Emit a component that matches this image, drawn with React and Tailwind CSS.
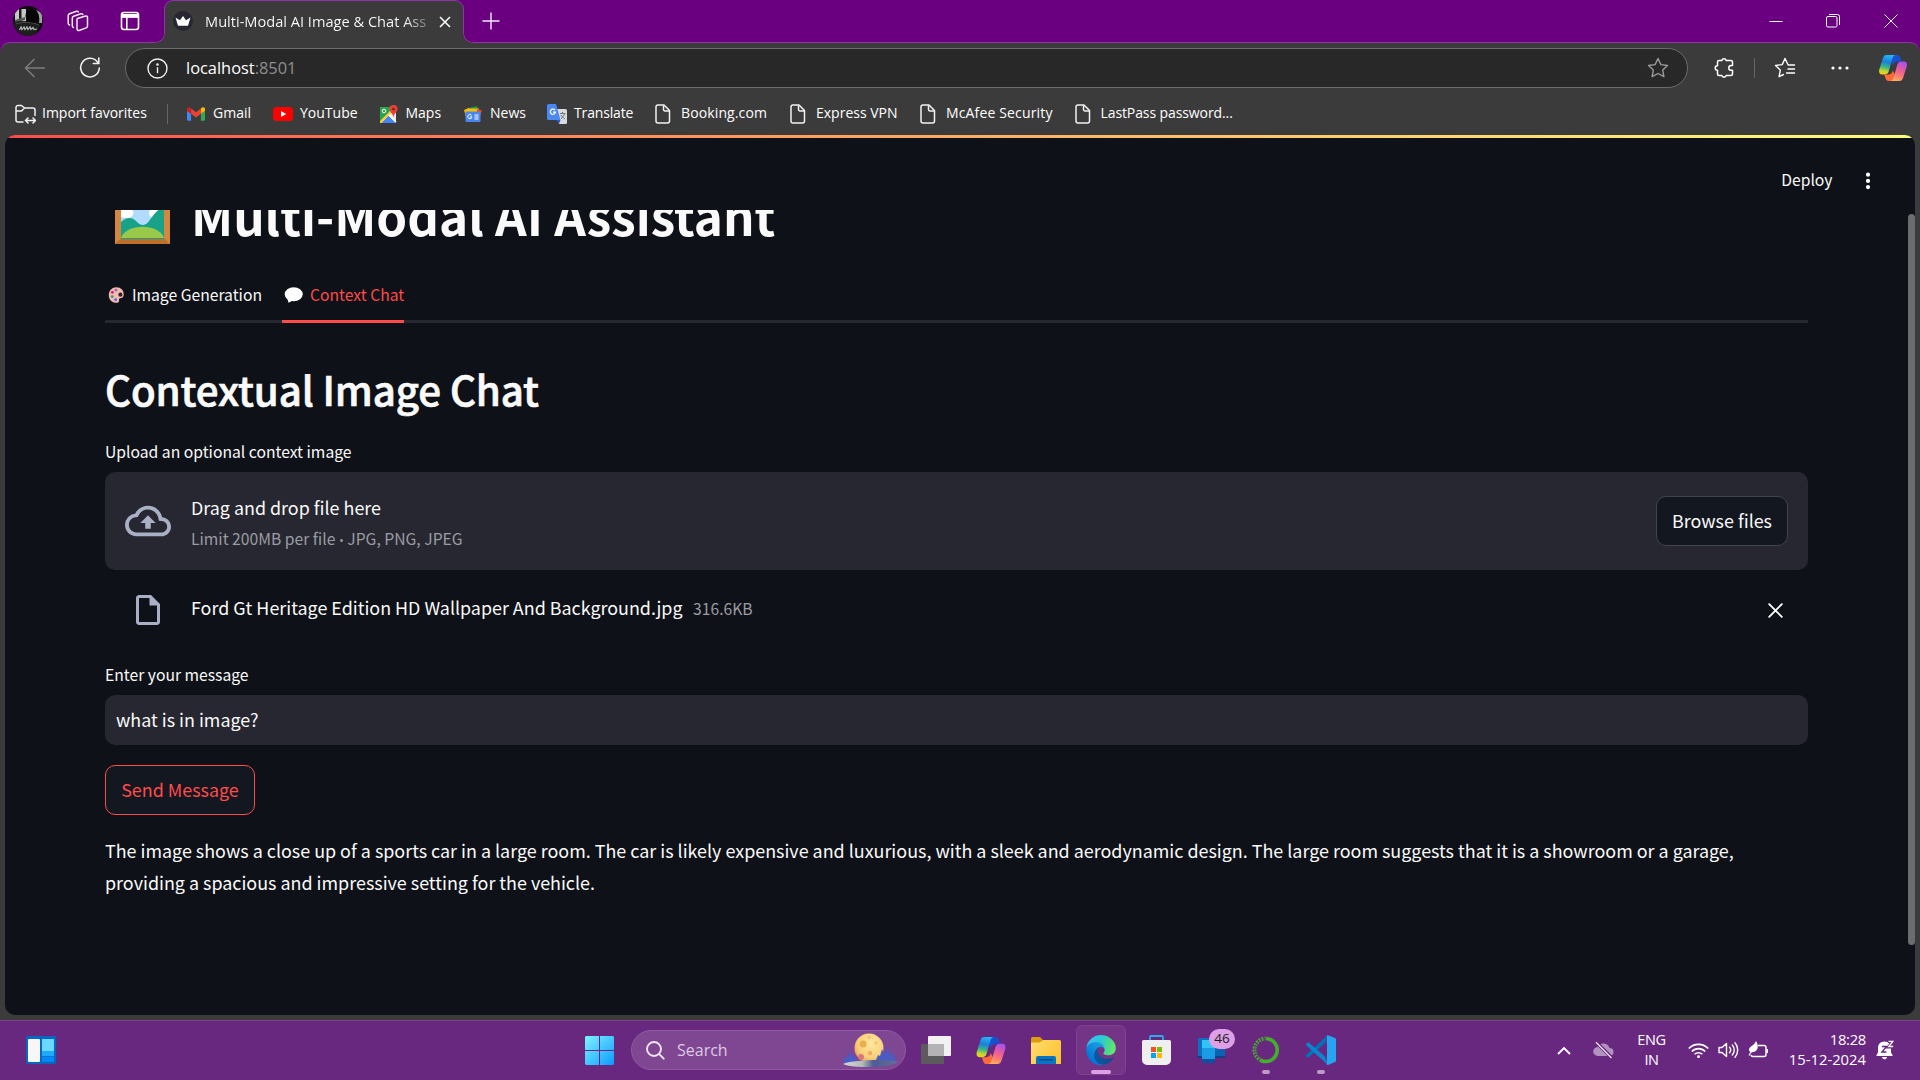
import React from 'react';

const UI = "font-['Open_Sans','Noto_Sans',sans-serif]";
const DOC = "font-['Noto_Sans_CJK_SC','Noto_Sans',sans-serif]";

function Copilot({ id, w, h }) {
  return (
    <svg width={w} height={h} viewBox="0 0 28 26" fill="none">
      <defs>
        <linearGradient id={id + 'a'} x1="9" y1="0" x2="5" y2="20" gradientUnits="userSpaceOnUse">
          <stop stopColor="#22b8f5" /><stop offset=".35" stopColor="#1a80dd" /><stop offset=".6" stopColor="#35b48a" /><stop offset=".82" stopColor="#c6d82c" /><stop offset="1" stopColor="#ffcc10" />
        </linearGradient>
        <linearGradient id={id + 'b'} x1="24" y1="7" x2="17" y2="26" gradientUnits="userSpaceOnUse">
          <stop stopColor="#a552f0" /><stop offset=".4" stopColor="#e85a9c" /><stop offset=".75" stopColor="#fb8070" /><stop offset="1" stopColor="#ffb15c" />
        </linearGradient>
      </defs>
      <path d="M14 0h4.2c2 0 2.8 1 3.4 3l1.2 3.6h-4c-3 0-3.8 1.6-4.6 4L12 6z" fill="#1c4ed0" />
      <path d="M14 26H9.8c-2 0-2.8-1-3.4-3l-1.2-3.6h4c3 0 3.8-1.6 4.6-4L16 20z" fill="#fb6a38" />
      <path d="M7.5 0H17c-2 0-3 1.6-3.6 3.6L9.8 16c-.8 2.6-2 3.5-4.6 3.5H3C.5 19.5-.4 17.5.3 14.5L3.8 3.5C4.6 1 5.6 0 7.5 0z" fill={`url(#${id}a)`} />
      <path d="M20.500 26H11c2 0 3-1.600 3.600-3.600L18.200 10c.8-2.600 2-3.500 4.600-3.500H25c2.500 0 3.400 2 2.700 5l-3.500 11c-.8 2.500-1.800 3.500-3.700 3.500z" fill={`url(#${id}b)`} />
    </svg>
  );
}

function PageIcon() {
  return (
    <svg width="20" height="20" viewBox="0 0 20 20" fill="none" stroke="#f2f2f2" strokeWidth="1.5" strokeLinejoin="round">
      <path d="M4 1h6l5.500 5.500V17a2 2 0 0 1-2 2H4a2 2 0 0 1-2-2V3a2 2 0 0 1 2-2z" /><path d="M9.500 1.500V5.500a1.500 1.500 0 0 0 1.500 1.500H15.500" />
    </svg>
  );
}

const icons = {
  gmail: (
    <svg width="18" height="14" viewBox="52 42 88 66">
      <path fill="#4285f4" d="M58 108h14V74L52 59v43c0 3.320 2.690 6 6 6" /><path fill="#34a853" d="M120 108h14c3.320 0 6-2.690 6-6V59l-20 15" />
      <path fill="#fbbc04" d="M120 48v26l20-15v-8c0-7.420-8.470-11.650-14.400-7.200" /><path fill="#ea4335" d="M72 74V48l24 18 24-18v26L96 92" />
      <path fill="#c5221f" d="M52 51v8l20 15V48l-5.600-4.200c-5.940-4.450-14.400-.220-14.400 7.200" />
    </svg>
  ),
  youtube: (
    <svg width="20" height="14" viewBox="0 0 20 14"><rect width="20" height="14" rx="3.500" fill="#f00" /><path d="M8 4l5.200 3L8 10z" fill="#fff" /></svg>
  ),
  maps: (
    <svg width="18" height="18" viewBox="0 0 18 18">
      <rect y="2" width="16" height="16" rx="1.500" fill="#e8e8e8" /><path d="M0 3.500A1.500 1.500 0 0 1 1.500 2H11l-2 7-9 9z" fill="#2ba24c" />
      <path d="M1 18l7.500-7.500L16 18z" fill="#4285f4" /><path d="M0 16L11 5l1.500 1.500L1.500 18H0z" fill="#fbcb3b" /><path d="M9 10l7 7" stroke="#fff" strokeWidth="1.600" />
      <circle cx="4" cy="6" r="1.800" fill="none" stroke="#fff" /><path d="M13.500 0a4 4 0 0 1 4 4c0 3-3.200 4.200-4 8-.8-3.800-4-5-4-8a4 4 0 0 1 4-4z" fill="#e94335" /><circle cx="13.500" cy="4" r="1.500" fill="#8c1d18" />
    </svg>
  ),
  news: (
    <svg width="18" height="16" viewBox="0 0 18 16">
      <path d="M4 2l9-2 1 4H4z" fill="#189a48" /><path d="M0 4l5-2 1 7-4 2z" fill="#fbbc04" /><path d="M3 2.500h12V9H3z" fill="#fbbc04" /><path d="M13 3l5 1.500L16 10l-3-1z" fill="#ea4335" />
      <rect x="1.500" y="5.500" width="15" height="10.500" rx="1" fill="#4a86f0" /><path d="M7.500 9.300a2.100 2.100 0 1 0 .4 1.700H6M10.500 9h4M10.500 11h4M10.500 13h4" stroke="#fff" fill="none" />
    </svg>
  ),
  translate: (
    <svg width="20" height="20" viewBox="0 0 20 20">
      <path d="M8 5h10.500A1.500 1.500 0 0 1 20 6.500V18.500a1.500 1.500 0 0 1-1.500 1.500H12z" fill="#d8dadd" /><path d="M1.500 0H9l4.500 16H1.500A1.500 1.500 0 0 1 0 14.500v-13A1.500 1.500 0 0 1 1.500 0z" fill="#4a88f2" />
      <path d="M9.500 16h4L12 20z" fill="#2b56c4" /><path d="M8 6.200a2.600 2.600 0 1 0 .5 2H6" stroke="#fff" strokeWidth="1.200" fill="none" /><path d="M13 9.500h5.500M15.500 8v1.500M17.500 9.500c-.5 2.500-2 4-3.500 5M14 11c.8 1.800 2.500 3 4 4" stroke="#70757c" fill="none" />
    </svg>
  ),
};

function Bookmark({ icon, label, width, tracking = '' }) {
  return (
    <div className={`flex shrink-0 items-center gap-[7px] ${width}`}>
      <span className="flex h-5 w-5 items-center justify-center">{icon}</span>
      <span className={`whitespace-nowrap pb-px text-sm leading-5 text-white ${tracking}`}>{label}</span>
    </div>
  );
}

function TabStrip() {
  return (
    <div className="flex h-[43px] items-center bg-[#6a0080]">
      <div className="flex w-[164px] shrink-0 items-center pb-px">
        <svg className="ml-[13px]" width="30" height="30" viewBox="0 0 30 30">
          <defs><clipPath id="av"><circle cx="15" cy="15" r="15" /></clipPath></defs>
          <g clipPath="url(#av)">
            <rect width="30" height="30" fill="#0c0d0c" /><path d="M2 3h11v12L2 18z" fill="#c4c9c4" /><path d="M6 3h2.500v14H6z" fill="#1b1b1b" /><path d="M2 14l10-3v3L2 17z" fill="#555a55" /><path d="M23 4l6 3v10h-3c1-5 0-9-3-13z" fill="#9da19d" />
            <path d="M0 17c6-3 10-2 14-1l13 3-5 11H5z" fill="#1d1f1d" /><path d="M3 18c7-2.500 16-2 23 1" stroke="#4b4e4b" fill="none" /><circle cx="19" cy="10" r="6.500" fill="#050505" />
            <path d="M6.500 24l1.500-3 1 2.500 2-2.500 1 2.500 2-2.500 1 2.500 2-2.500 1 2.500 2-2 1 2 3-.5" stroke="#b9bdb9" strokeWidth="1.200" fill="none" />
          </g>
        </svg>
        <svg className="ml-6" width="22" height="22" viewBox="0 0 22 22" fill="none" stroke="#f6e8fa" strokeWidth="1.500" strokeLinejoin="round" strokeLinecap="round">
          <path d="M10.500 8.500L18.500 6a1.500 1.500 0 0 1 2 1.500v8.500a2 2 0 0 1-1.300 1.900L12 20.500a1.500 1.500 0 0 1-2-1.400V9.500a1 1 0 0 1 .5-1z" />
          <path d="M6.500 17.500a2 2 0 0 1-1.200-1.800V8.200a2 2 0 0 1 1.300-1.900L14 3.800a1.500 1.500 0 0 1 1.800.7" />
          <path d="M2.500 15a2 2 0 0 1-1.300-1.800V5.600a2 2 0 0 1 1.300-1.900L9.500 1.300a1.500 1.500 0 0 1 1.800.7" />
        </svg>
        <svg className="ml-[31px]" width="20" height="20" viewBox="0 0 20 20" fill="none" stroke="#fff" strokeWidth="1.600">
          <rect x="1.500" y="1.500" width="17" height="17" rx="2.500" /><path d="M2 3h16v3.500H2z" fill="#fff" stroke="none" /><path d="M2 6h16M6.800 6v12" />
        </svg>
      </div>
      <div className="relative flex h-[43px] w-[300px] shrink-0 items-center rounded-t-[9px] border-x border-t border-[#8e35a3] bg-[#3b3b3b] pb-[2px] pl-2">
        <span className="absolute -left-[9px] bottom-0 h-[9px] w-[9px] bg-[radial-gradient(circle_at_0_0,transparent_7.500px,#8e35a3_8px,#3b3b3b_9px)]" />
        <span className="absolute -right-[9px] bottom-0 h-[9px] w-[9px] bg-[radial-gradient(circle_at_100%_0,transparent_7.500px,#8e35a3_8px,#3b3b3b_9px)]" />
        <svg width="20" height="20" viewBox="0 0 20 20"><circle cx="10" cy="10" r="10" fill="#262730" /><path d="M2.500 6.500L7 9.200 10 5l3 4.200 4.500-2.700-2.500 8.300H5z" fill="#fff" /></svg>
        <div className="ml-3 w-[225px] overflow-hidden whitespace-nowrap bg-gradient-to-r from-white from-88% to-white/25 bg-clip-text pb-px text-[14.600px] leading-6 text-transparent">Multi-Modal AI Image &amp; Chat Ass</div>
        <svg className="ml-[9px] mt-0.5" width="12" height="12" viewBox="0 0 12 12" stroke="#fff" strokeWidth="1.500"><path d="M1 1l10 10M11 1L1 11" /></svg>
      </div>
      <svg className="-mt-0.5 ml-[18px]" width="18" height="18" viewBox="0 0 18 18" stroke="#f6e8fa" strokeWidth="1.400"><path d="M9 .5v17M.5 9h17" /></svg>
      <div className="-mt-px ml-auto flex items-center pr-[22px] text-white">
        <svg width="14" height="14" viewBox="0 0 14 14" stroke="currentColor"><path d="M.5 7.500h13" /></svg>
        <svg className="ml-[43px]" width="14" height="14" viewBox="0 0 14 14" stroke="currentColor" fill="none"><rect x=".5" y="2.500" width="10.500" height="10.500" rx="1.500" /><path d="M3 .5h8.500a2 2 0 0 1 2 2V11" /></svg>
        <svg className="ml-11" width="14" height="14" viewBox="0 0 14 14" stroke="currentColor"><path d="M.5 .5l13 13M13.500 .5l-13 13" /></svg>
      </div>
    </div>
  );
}

function Toolbar() {
  return (
    <div className="flex h-[50px] items-center pl-6 pr-[13px]">
      <svg width="22" height="20" viewBox="0 0 22 20" fill="none" stroke="#7d7d7d" strokeWidth="1.500"><path d="M21 10H2M10.500 1L1.500 10l9 9" /></svg>
      <svg className="ml-[33px]" width="22" height="22" viewBox="0 0 22 22" fill="none" stroke="#f0f0f0" strokeWidth="1.600" strokeLinecap="round"><path d="M18.800 5.500A9.300 9.300 0 1 0 20.300 11" /><path d="M19.800 1v5.500h-5.500" /></svg>
      <div className="ml-6 flex h-10 w-[1563px] items-center rounded-full border border-[#6c6c6c] bg-[#282828] pl-[21px] pr-[18px]">
        <svg width="21" height="21" viewBox="0 0 21 21" fill="none" stroke="#f0f0f0" strokeWidth="1.400"><circle cx="10.500" cy="10.500" r="9.500" /><path d="M10.500 9.300v6" /><circle cx="10.500" cy="6.500" r=".6" fill="#f0f0f0" /></svg>
        <span className="ml-[18px] pb-px text-[16.400px] leading-6 text-white">localhost<span className="text-[#8f8f8f]">:8501</span></span>
        <svg className="ml-auto" width="22" height="22" viewBox="0 0 22 22" fill="none" stroke="#9a9a9a" strokeWidth="1.400" strokeLinejoin="round"><path d="M11 1.500l2.900 6.100 6.600.9-4.800 4.600 1.200 6.600L11 16.500l-5.900 3.200 1.200-6.600L1.500 8.500l6.600-.9z" /></svg>
      </div>
      <svg className="ml-[26px]" width="21" height="22" viewBox="0 0 21 22" fill="none" stroke="#fff" strokeWidth="1.500" strokeLinejoin="round">
        <path d="M5 3.500h2.800a2.300 2.300 0 0 1 4.400 0H17a1.500 1.500 0 0 1 1.500 1.500v3.500h-1.300a2.400 2.400 0 0 0 0 4.800h1.300V17a1.500 1.500 0 0 1-1.500 1.500h-4.800a2.300 2.300 0 0 1-4.400 0H5A1.500 1.500 0 0 1 3.500 17v-3.700a2.300 2.300 0 0 1 0-4.600V5A1.500 1.500 0 0 1 5 3.500z" />
      </svg>
      <span className="ml-[19px] h-5 w-px bg-[#666]" />
      <svg className="ml-[19px]" width="22" height="22" viewBox="0 0 22 22" fill="none" stroke="#fff" strokeWidth="1.400" strokeLinejoin="round" strokeLinecap="round">
        <path d="M20.500 8h-6.300l-3.200-6.500L8.200 7.600l-6.700.9 4.800 4.600-1.200 6.600 4.400-2.200M14 12h6.500M12.500 16h8" />
      </svg>
      <svg className="ml-[35px]" width="18" height="4" viewBox="0 0 18 4" fill="#fff"><circle cx="2" cy="2" r="1.600" /><circle cx="9" cy="2" r="1.600" /><circle cx="16" cy="2" r="1.600" /></svg>
      <div className="ml-auto"><Copilot id="ct" w={28} h={26} /></div>
    </div>
  );
}

function Bookmarks() {
  return (
    <div className="flex h-[42px] items-center pb-px pl-[15px]">
      <div className="flex w-[171px] shrink-0 items-center gap-1.5">
        <svg width="21" height="20" viewBox="0 0 21 20" fill="none" stroke="#f2f2f2" strokeWidth="1.500" strokeLinejoin="round" strokeLinecap="round">
          <path d="M8 18H3a2 2 0 0 1-2-2V3.500a2 2 0 0 1 2-2h3.500l3 2.500H18a2 2 0 0 1 2 2v5.500M1 7h5.500l3-3" /><path d="M11 16.500h9M13 14l-2.500 2.500L13 19M18 14l2.500 2.500L18 19" />
        </svg>
        <span className="whitespace-nowrap pb-px text-sm leading-5 text-white">Import favorites</span>
        <span className="ml-auto mr-[18px] h-5 w-px bg-[#666]" />
      </div>
      <Bookmark icon={icons.gmail} label="Gmail" width="w-[87px]" />
      <Bookmark icon={icons.youtube} label="YouTube" width="w-[105.500px]" />
      <Bookmark icon={icons.maps} label="Maps" width="w-[84.500px]" />
      <Bookmark icon={icons.news} label="News" width="w-[84px]" />
      <Bookmark icon={icons.translate} label="Translate" width="w-[107px]" tracking="tracking-[-0.150px]" />
      <Bookmark icon={<PageIcon />} label="Booking.com" width="w-[135px]" tracking="tracking-[0.120px]" />
      <Bookmark icon={<PageIcon />} label="Express VPN" width="w-[130px]" />
      <Bookmark icon={<PageIcon />} label="McAfee Security" width="w-[154.500px]" tracking="tracking-[0.150px]" />
      <Bookmark icon={<PageIcon />} label="LastPass password..." width="w-[170px]" tracking="tracking-[-0.100px]" />
    </div>
  );
}

function FrameEmoji() {
  return (
    <svg className="mt-[5px] shrink-0" width="55" height="55" viewBox="0 0 55 55">
      <rect width="55" height="55" fill="#d3873f" />
      <path d="M0 55l6-6h43l6 6z" fill="#bd702c" />
      <rect x="6" y="6" width="43" height="43" fill="#b1dcff" />
      <path d="M6 20h10a4.500 4.500 0 0 1 0 8c-3 1.500-7 1-10 0zM46 18l-5 11c-3 1-7-1-7-5s4-6 12-6z" fill="#fff" />
      <path d="M6 33c5-5 11-5 15-1 3 3 5 4 7 4 7 0 9-14 21-18v32H6z" fill="#18a287" />
      <path d="M6 49c5-15 38-15 43 0z" fill="#98c94a" />
    </svg>
  );
}

function Page() {
  return (
    <div className={`flex h-[880px] flex-col overflow-hidden rounded-[10px] bg-[#0e1117] text-[#fafafa] ${DOC}`}>
      <div className="h-[3px] bg-gradient-to-r from-[#ff4b4b] to-[#fffd80]" />
      <div className="flex h-[72px] items-center justify-end pb-[2px] pr-[44.500px] pt-[13px]">
        <span className="text-[15.700px] leading-6">Deploy</span>
        <svg className="ml-8 mt-[2px]" width="6" height="18" viewBox="0 0 6 18" fill="#fff"><circle cx="3" cy="2.700" r="2.100" /><circle cx="3" cy="8.900" r="2.100" /><circle cx="3" cy="15.100" r="2.100" /></svg>
      </div>
      <div className="flex flex-1 overflow-hidden">
        <div className="-mt-7 ml-[100px] flex w-[1703px] flex-col">
          <div className="flex h-16 items-center pl-[10px]">
            <FrameEmoji />
            <h1 className="ml-[21px] mt-px whitespace-nowrap text-[49.400px] font-bold leading-[64px]">Multi-Modal AI Assistant</h1>
          </div>
          <div className="mt-6 flex h-[53px] gap-5 border-b-[3px] border-[#262730]">
            <div className="flex w-[157px] items-center gap-[7px] pb-px pl-0.5">
              <svg width="20" height="18" viewBox="0 0 20 18">
                <path d="M10.500.4c5 0 8.200 3.600 8.200 7.800 0 3.400-1.800 4.200-3.700 4.400-1.600.2-1.800 1-1.500 2.200.4 1.700-.8 2.900-3 2.900-5 0-8.500-3.600-8.500-8.500C2 4 5.800.4 10.500.4z" fill="#f6b9ad" />
                <circle cx="15" cy="8.600" r="2.300" fill="#2a2228" /><circle cx="10" cy="3.500" r="1.600" fill="#8a63cf" /><circle cx="6" cy="6" r="1.600" fill="#d61c78" /><circle cx="5.800" cy="10.800" r="1.600" fill="#22a07f" /><circle cx="9.700" cy="14.300" r="1.600" fill="#5065e8" />
              </svg>
              <span className="whitespace-nowrap text-[15.700px] leading-6">Image Generation</span>
            </div>
            <div className="flex h-[53px] w-[121.500px] items-center gap-[7px] border-b-[3px] border-[#ff4b4b] pl-0.5 text-[#ff4b4b]">
              <svg className="shrink-0" width="19" height="16" viewBox="0 0 19 16" fill="#fff"><ellipse cx="9.700" cy="7.300" rx="9" ry="7" /><path d="M3 10l1.500 5.800L10 13z" /></svg>
              <span className="whitespace-nowrap text-[15.700px] leading-6">Context Chat</span>
            </div>
          </div>
          <h2 className="mt-[39px] text-[40.300px] font-medium leading-[54px] tracking-[-0.120px] [-webkit-text-stroke:0.7px_#fafafa]">Contextual Image Chat</h2>
          <div className="mt-[23px] text-[15.700px] leading-[25px]">Upload an optional context image</div>
          <div className="mt-2 flex h-[98px] shrink-0 items-center rounded-[10px] bg-[#262730] px-5">
            <svg width="46" height="46" viewBox="0 0 24 24" fill="#a9afc5"><path d="M19.350 10.040A7.490 7.490 0 0 0 12 4C9.110 4 6.600 5.640 5.350 8.040A5.994 5.994 0 0 0 0 14c0 3.310 2.690 6 6 6h13c2.760 0 5-2.240 5-5 0-2.640-2.050-4.780-4.650-4.960zM19 18H6c-2.210 0-4-1.790-4-4 0-2.050 1.530-3.760 3.560-3.970l1.070-.110.500-.950A5.469 5.469 0 0 1 12 6c2.620 0 4.880 1.860 5.390 4.430l.300 1.500 1.530.110A2.980 2.980 0 0 1 22 15c0 1.650-1.350 3-3 3zM8 13h2.550v3h2.900v-3H16l-4-4z" /></svg>
            <div className="ml-5 flex flex-col gap-[3px] pt-1">
              <span className="text-[17.900px] leading-[30px]">Drag and drop file here</span>
              <span className="text-[15.700px] leading-7 text-[#9b9ca1]">Limit 200MB per file <span className="font-['Open_Sans'] text-[13px]">•</span> JPG, PNG, JPEG</span>
            </div>
            <button className="ml-auto flex h-[50px] w-[132px] items-center justify-center rounded-[10px] border border-[#41444c] bg-[#131720] pb-px text-[17.900px]">Browse files</button>
          </div>
          <div className="mt-5 flex h-9 items-center pl-[25px] pr-[25px]">
            <svg className="mt-1" width="36" height="36" viewBox="0 0 24 24" fill="#a9afc5"><path d="M14 2H6c-1.100 0-1.990.900-1.990 2L4 20c0 1.100.890 2 1.990 2H18c1.100 0 2-.900 2-2V8l-6-6zM6 20V4h7v5h5v11H6z" /></svg>
            <span className="-mt-0.5 ml-[25px] text-[17.900px] leading-[30px]">Ford Gt Heritage Edition HD Wallpaper And Background.jpg</span>
            <span className="ml-[10.500px] mt-px text-[15.700px] text-[#9b9ca1]">316.6KB</span>
            <svg className="ml-auto mt-1" width="15" height="15" viewBox="0 0 15 15" stroke="#fff" strokeWidth="1.900" strokeLinecap="round"><path d="M1.200 1.200l12.600 12.600M13.800 1.200L1.200 13.800" /></svg>
          </div>
          <div className="mt-[36px] text-[15.700px] leading-[25px]">Enter your message</div>
          <div className="mt-2 flex h-[50px] items-center rounded-[10px] bg-[#262730] pb-0.5 pl-[11px] text-[17.900px]">what is in image?</div>
          <button className="mt-5 flex h-[50px] w-[150px] items-center justify-center rounded-[10px] border border-[#ff4b4b] bg-[#131720] pb-0.5 text-[17.900px] text-[#ff4b4b]">Send Message</button>
          <p className="mt-[19px] text-[17.910px] leading-8">The image shows a close up of a sports car in a large room. The car is likely expensive and luxurious, with a sleek and aerodynamic design. The large room suggests that it is a showroom or a garage,<br />providing a spacious and impressive setting for the vehicle.</p>
        </div>
        <div className="ml-auto mt-1 h-[731px] w-[7px] rounded-full bg-[#6b6c70]" />
      </div>
    </div>
  );
}

function TaskButton({ children, active, dot }) {
  return (
    <div className={active ? 'relative flex h-[50px] w-[50px] items-center justify-center rounded-md border border-[#7e4290] bg-[#743587]' : 'relative flex h-[50px] w-[50px] items-center justify-center'}>
      {children}
      {active && <span className="absolute bottom-0 h-1 w-5 rounded-full bg-[#dda0e6]" />}
      {dot && <span className="absolute bottom-px h-1 w-2 rounded-full bg-[#ba9ac6]" />}
    </div>
  );
}

function Taskbar() {
  return (
    <div className="flex h-[60px] items-center border-t border-[#7b4789] bg-[#692880] pb-px">
      <svg className="ml-[26px] shrink-0" width="30" height="28" viewBox="0 0 30 28">
        <rect width="30" height="28" rx="1.500" fill="#0766bd" /><rect x="2" y="3" width="12" height="23" rx="1" fill="#f7f7f7" /><rect x="16" y="3" width="12" height="12" fill="#69d9ff" /><rect x="16" y="15" width="12" height="5" fill="#1fa8ff" /><rect x="16" y="20.500" width="12" height="5.500" fill="#0587f5" />
      </svg>
      <svg className="ml-[529px] shrink-0" width="29" height="29" viewBox="0 0 29 29">
        <defs><linearGradient id="win" x1="0" y1="0" x2="29" y2="29" gradientUnits="userSpaceOnUse"><stop stopColor="#80f2ff" /><stop offset="1" stopColor="#0a9bff" /></linearGradient></defs>
        <path d="M1 0h13v14H0V1zM15 0h13l1 1v13H15zM0 15h14v14H1l-1-1zM15 15h14v13l-1 1H15z" fill="url(#win)" />
      </svg>
      <div className="ml-[17px] flex h-10 w-[275px] shrink-0 items-center rounded-full border border-[#8f5a9f] bg-[#7f4692] pl-3.5 pr-[7px]">
        <svg width="19" height="19" viewBox="0 0 19 19" fill="none" stroke="#efe6f2" strokeWidth="1.900" strokeLinecap="round"><circle cx="8" cy="8" r="7" /><path d="M13.200 13.200l4.500 4.500" /></svg>
        <span className="ml-3 text-base leading-6 text-[#dccbe2]">Search</span>
        <svg className="ml-auto" width="55" height="34" viewBox="0 0 55 34">
          <defs>
            <radialGradient id="moon" cx=".6" cy=".35" r=".7"><stop stopColor="#ffe9a0" /><stop offset=".7" stopColor="#f8cf78" /><stop offset="1" stopColor="#eb9a58" /></radialGradient>
            <linearGradient id="land"><stop stopColor="#d9d6d8" /><stop offset=".35" stopColor="#b3bbb8" /><stop offset=".55" stopColor="#4e5b96" /><stop offset="1" stopColor="#637099" /></linearGradient>
          </defs>
          <circle cx="26" cy="15" r="14.500" fill="url(#moon)" />
          <circle cx="20" cy="11" r="3.500" fill="#e8ae50" /><circle cx="26" cy="4.500" r="1.800" fill="#f3c471" /><circle cx="33" cy="10" r="2" fill="#f6ca78" /><circle cx="27" cy="20" r="2.200" fill="#f3a968" /><circle cx="18" cy="24" r="3" fill="#d9787a" />
          <path d="M0 30l2-8 2 4 3-8 2.500 7 2-4 3 9zM33 27l2-5 2 1 2-7 2.500 6 3-8 3 9 2-4 4 9z" fill="#4b5bc4" />
          <path d="M0 31c6-3 24-4 34-4 10 0 18 .5 21 2-4 3-16 5-28 5S5 33.500 0 31z" fill="url(#land)" />
        </svg>
      </div>
      <div className="ml-[5px] flex shrink-0 gap-[5px]">
        <TaskButton>
          <svg width="30" height="28" viewBox="0 0 30 28"><rect y="8" width="23" height="20" rx="1" fill="#5d5a5e" /><rect x="7" width="23" height="20" rx="1" fill="#f1f1f1" /><path d="M7 8h16v12H7z" fill="#b4b2b4" /></svg>
        </TaskButton>
        <TaskButton><Copilot id="cb" w={30} h={27} /></TaskButton>
        <TaskButton>
          <svg width="30" height="27" viewBox="0 0 30 27">
            <defs><linearGradient id="fold" x1="0" y1="4" x2="30" y2="27" gradientUnits="userSpaceOnUse"><stop stopColor="#ffdc70" /><stop offset="1" stopColor="#fdc02a" /></linearGradient></defs>
            <path d="M0 1.500A1.500 1.500 0 0 1 1.500 0H9l4 4-3 4H0z" fill="#dc9b08" /><path d="M0 7V5.500h8.500L12.500 3H28.500A1.500 1.500 0 0 1 30 4.500V27H0z" fill="url(#fold)" />
            <path d="M5 27v-6a2 2 0 0 1 2-2h16a2 2 0 0 1 2 2v6z" fill="#0a74c4" /><path d="M8.500 22.800h13" stroke="#054b86" strokeWidth="1.400" strokeLinecap="round" />
          </svg>
        </TaskButton>
        <TaskButton active>
          <svg width="30" height="30" viewBox="4 0 257 260">
            <defs>
              <linearGradient id="e1" x1="63" y1="177" x2="241" y2="177" gradientUnits="userSpaceOnUse"><stop stopColor="#0c59a4" /><stop offset="1" stopColor="#114a8b" /></linearGradient>
              <linearGradient id="e2" x1="157" y1="90" x2="46" y2="210" gradientUnits="userSpaceOnUse"><stop stopColor="#1b9de2" /><stop offset=".3" stopColor="#1595df" /><stop offset="1" stopColor="#0078d7" /></linearGradient>
              <linearGradient id="e3" x1="10" y1="60" x2="255" y2="130" gradientUnits="userSpaceOnUse"><stop stopColor="#35c1f1" /><stop offset=".45" stopColor="#2ac9d9" /><stop offset=".75" stopColor="#4ad98a" /><stop offset="1" stopColor="#66eb6e" /></linearGradient>
            </defs>
            <path fill="url(#e1)" d="M235.680 195.460a93.730 93.730 0 0 1-10.540 4.710 101.870 101.870 0 0 1-35.900 6.460c-47.320 0-88.540-32.550-88.540-74.320A31.480 31.480 0 0 1 117.130 105c-42.800 1.800-53.800 46.400-53.800 72.530 0 73.880 68.090 81.370 82.760 81.370 7.910 0 19.840-2.300 27-4.560l1.310-.440a128.340 128.340 0 0 0 66.600-52.800 4 4 0 0 0-5.320-5.640z" />
            <path fill="url(#e2)" d="M110.340 246.340A79.200 79.200 0 0 1 87.600 225a80.720 80.720 0 0 1 29.530-120c3.120-1.470 8.450-4.130 15.540-4a32.350 32.350 0 0 1 25.690 13 31.880 31.880 0 0 1 6.360 18.660c0-.210 24.460-79.600-80-79.600-43.900 0-80 41.660-80 78.210a130.150 130.150 0 0 0 12.110 56 128 128 0 0 0 156.380 67.110 75.550 75.550 0 0 1-62.780-8z" />
            <path fill="url(#e3)" d="M156.940 153.780c-.810 1.050-3.300 2.500-3.300 5.660 0 2.610 1.700 5.120 4.720 7.230 14.380 10 41.490 8.680 41.560 8.680a59.560 59.560 0 0 0 30.270-8.350 61.380 61.380 0 0 0 30.430-52.880c.260-22.410-8-37.310-11.340-43.910C228.090 28.760 182.350.190 132.610.190a128 128 0 0 0-128 126.200c.480-36.540 36.800-66.050 80-66.050 3.500 0 23.460.340 42 10.070 16.340 8.580 24.900 18.940 30.850 29.210 6.180 10.670 7.280 24.150 7.280 29.520s-2.740 13.330-7.800 19.640z" />
          </svg>
        </TaskButton>
        <TaskButton>
          <svg width="29" height="30" viewBox="0 0 29 30"><path d="M8 6V2.200C8 1.500 8.400 1 9 1h11c.6 0 1 .5 1 1.200V6" stroke="#26b0ea" strokeWidth="1.800" fill="none" /><path d="M1.500 5h26A1.500 1.500 0 0 1 29 6.500V25a5 5 0 0 1-5 5H5a5 5 0 0 1-5-5V6.500A1.500 1.500 0 0 1 1.500 5z" fill="#f0eff0" /><path fill="#f25022" d="M9 12h5v5H9z" /><path fill="#7fba00" d="M15 12h5v5h-5z" /><path fill="#00a4ef" d="M9 18h5v5H9z" /><path fill="#ffb900" d="M15 18h5v5h-5z" /></svg>
        </TaskButton>
        <TaskButton>
          <svg width="30" height="28" viewBox="0 0 30 28"><path d="M2 2h12v19H2z" fill="#0d6fc0" /><path d="M14 6h15v15H14z" fill="#0b63b4" /><path d="M0 20h30l-2 2H2z" fill="#123f86" /><path d="M6 4h13v19H6z" fill="#1a9be4" /><path d="M6 4h13v8H6z" fill="#31c4f5" /><path d="M6 23h13v4H6z" fill="#0f4f9e" /></svg>
          <span className="absolute left-[23px] top-1 flex h-5 w-[26px] items-center justify-center rounded-full bg-[#dda0e6] text-[13.500px] leading-none text-[#1a1a1a]">46</span>
        </TaskButton>
        <TaskButton dot>
          <svg width="28" height="28" viewBox="0 0 28 28" fill="none"><path d="M14 2.500a11.500 11.500 0 1 1-5 22" stroke="#43b02a" strokeWidth="3.600" /><path d="M9.500 24.600A11.500 11.500 0 0 1 13.500 2.500" stroke="#43b02a" strokeWidth="3.800" strokeDasharray="2 1" /><path d="M8.500 24A11.500 11.500 0 0 1 13.500 2.500" stroke="#692880" strokeWidth=".8" strokeDasharray="2.200 1.200" /></svg>
        </TaskButton>
        <TaskButton dot>
          <svg width="30" height="30" viewBox="0 0 30 30"><path d="M22 0l-3.500 8.500L2.800 22.300a1.500 1.500 0 0 1-1.500 0L.5 21.300a1.200 1.200 0 0 1 0-1.800z" fill="#0072b8" /><path d="M22 30l-3.500-9L2.800 7.700a1.500 1.500 0 0 0-1.500 0L.5 8.700a1.200 1.200 0 0 0 0 1.800z" fill="#0a86cf" /><path d="M22 .2L29 3a1.500 1.500 0 0 1 1 1.500v21a1.500 1.500 0 0 1-1 1.500l-7 2.900c-.8.200-1.200-.2-1.200-1V1.200c0-.8.400-1.200 1.200-1z" fill="#26a3f1" /><path d="M21 8.500v13L12.500 15z" fill="#692880" /></svg>
        </TaskButton>
      </div>
      <div className="ml-auto flex items-center pr-[25px] text-white">
        <svg width="14" height="9" viewBox="0 0 14 9" fill="none" stroke="#fff" strokeWidth="1.800"><path d="M1 8l6-6 6 6" /></svg>
        <svg className="ml-[22px]" width="21" height="18" viewBox="0 0 21 18"><path d="M5 15a4.500 4.500 0 0 1-.5-9A6.500 6.500 0 0 1 16.500 7a4 4 0 0 1 0 8z" fill="#b292bf" /><path d="M3 1l16 16" stroke="#692880" strokeWidth="3.500" /><path d="M3 1.200L18.500 17" stroke="#ece2f0" strokeWidth="1.300" /></svg>
        <div className="-mt-px ml-[23px] flex w-[29px] flex-col items-center text-[14.500px] leading-5 tracking-[-0.400px]"><span>ENG</span><span>IN</span></div>
        <svg className="ml-[22px]" width="21" height="17" viewBox="0 0 21 17" fill="none" stroke="#fff" strokeWidth="1.600"><path d="M.8 6.500a13.500 13.500 0 0 1 19.400 0M3.800 9.500a9.300 9.300 0 0 1 13.400 0M6.600 12.300a5.500 5.500 0 0 1 7.800 0" /><circle cx="10.500" cy="14.700" r="1.400" fill="#fff" stroke="none" /></svg>
        <svg className="ml-[9px]" width="21" height="18" viewBox="0 0 21 18" fill="none" stroke="#fff" strokeWidth="1.400" strokeLinejoin="round" strokeLinecap="round"><path d="M1 6.500h3L8.500 2.500v13L4 11.500H1z" /><path d="M11.500 6.300a4 4 0 0 1 0 5.400M14.300 4a7.500 7.500 0 0 1 0 10M17 1.800a11 11 0 0 1 0 14.400" /></svg>
        <svg className="ml-[9px]" width="21" height="18" viewBox="0 0 21 18" fill="none"><path d="M10 4.500h6a2 2 0 0 1 2 2v7a2 2 0 0 1-2 2H5a2 2 0 0 1-2-1.500" stroke="#fff" strokeWidth="1.500" /><path d="M18.500 8h1.500v4h-1.500z" fill="#fff" /><path d="M8 0c2.500 4 2.500 9-1 10.500C4 11.800 1 11.500 1 8.500 1 5.500 6.500 4.500 8 0z" fill="#fff" /><path d="M1 14.500L5.500 7" stroke="#fff" strokeWidth="1.200" /></svg>
        <div className="-mt-[3px] ml-[19px] flex w-[78px] flex-col items-end whitespace-nowrap text-[14.800px] leading-5"><span className="tracking-[-0.300px]">18:28</span><span>15-12-2024</span></div>
        <svg className="ml-2.5" width="19" height="20" viewBox="0 0 19 20"><path d="M8.500 1.500c4 0 6.500 2.800 6.500 6.500v4.500l1.500 2.500v1H.5v-1L2 12.500V8c0-3.700 2.500-6.500 6.500-6.500zM6 17h5c-.3 1.500-1.200 2.300-2.500 2.300S6.300 18.500 6 17z" fill="#fff" /><path d="M6 6.500h4.500L6 12h4.500" stroke="#692880" strokeWidth="1.400" fill="none" /><path d="M12 1.500h5L12.500 7h5" stroke="#692880" strokeWidth="3" fill="none" /><path d="M12.500 1.300h4.300L12.800 6.500h4.400" stroke="#fff" strokeWidth="1.300" fill="none" /></svg>
      </div>
    </div>
  );
}

export default function App() {
  return (
    <div className={`flex h-[1080px] w-[1920px] flex-col overflow-hidden bg-[#6a0080] ${UI}`}>
      <TabStrip />
      <div className="-mt-px h-[978px] overflow-hidden rounded-t-[10px] border-t border-[#8e35a3] bg-[#3b3b3b]">
        <Toolbar />
        <Bookmarks />
        <div className="px-[5px]"><Page /></div>
      </div>
      <Taskbar />
    </div>
  );
}
